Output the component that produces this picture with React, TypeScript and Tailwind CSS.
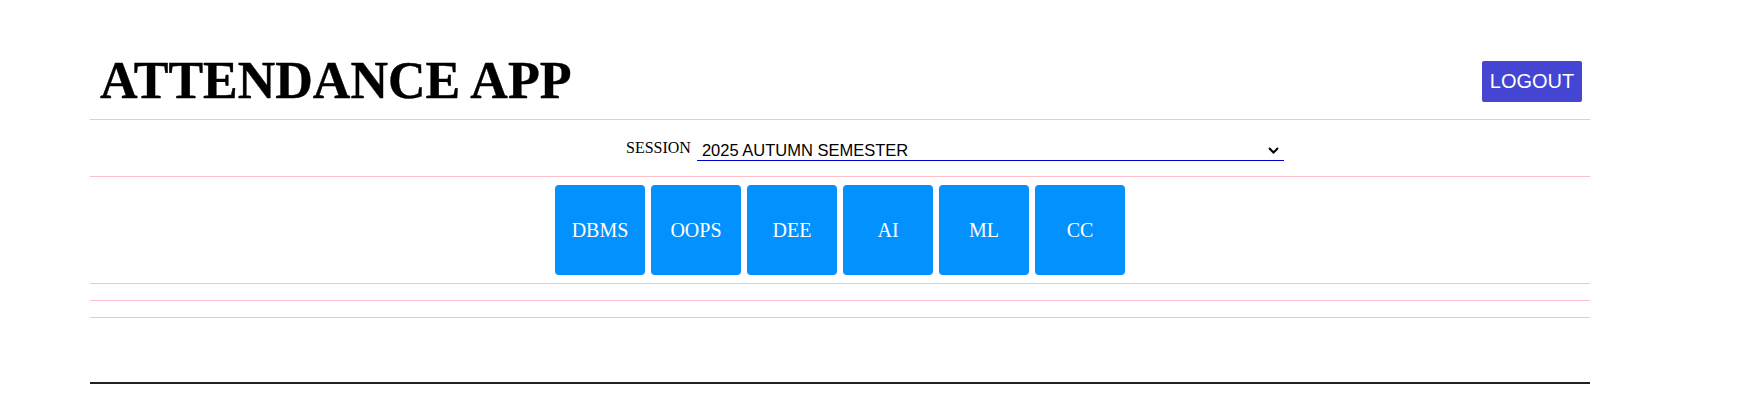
import React from "react";

const subjects = ["DBMS", "OOPS", "DEE", "AI", "ML", "CC"];

export default function App() {
  return (
    <div className="w-[1740px] min-h-[409px] bg-white pt-[43px]">
      <div className="ml-[90px] w-[1500px]">
        <header className="box-border flex h-[77px] items-center justify-between border-b border-[#ffc0cb]">
          <h1
            className="pl-[10px] text-[52px] font-bold leading-normal text-black"
            style={{ fontFamily: '"Liberation Serif", "Times New Roman", serif', WebkitTextStroke: "0.4px #000" }}
          >
            ATTENDANCE APP
          </h1>
          <button
            className="mr-[8px] box-border flex h-[41px] w-[100px] items-center justify-center rounded-[2px] bg-[#4545d3] text-[20px] text-white"
            style={{ fontFamily: '"Liberation Sans", Arial, sans-serif' }}
          >
            LOGOUT
          </button>
        </header>

        <div className="box-border flex h-[57px] items-center border-b border-[#ffc0cb] pl-[536px]">
          <label
            className="text-[16px] leading-normal text-black"
            style={{ fontFamily: '"Liberation Serif", "Times New Roman", serif' }}
          >
            SESSION
          </label>
          <div className="relative ml-[6px] mt-[2px] w-[587px]">
            <select
              className="box-border block h-[24px] w-full appearance-none border-0 border-b border-[#0000cd] bg-transparent pl-[5px] pt-[3px] text-[16.5px] leading-[18px] text-black outline-none"
              style={{ fontFamily: '"Liberation Sans", Arial, sans-serif' }}
              defaultValue="2025 AUTUMN SEMESTER"
            >
              <option>2025 AUTUMN SEMESTER</option>
            </select>
            <svg
              className="pointer-events-none absolute right-[5px] top-[10px]"
              width="11"
              height="7"
              viewBox="0 0 11 7"
              fill="none"
            >
              <path d="M1 1 L5.5 5.5 L10 1" stroke="#000" strokeWidth="2" />
            </svg>
          </div>
        </div>

        <div className="box-border flex h-[107px] items-center justify-center gap-[6px] border-b border-[#ffc0cb] py-[8px]">
          {subjects.map((s) => (
            <button
              key={s}
              className="flex h-[90px] w-[90px] items-center justify-center rounded-[4px] bg-[#0391fe] text-[20px] text-white"
              style={{ fontFamily: '"Liberation Serif", "Times New Roman", serif' }}
            >
              {s}
            </button>
          ))}
        </div>

        <div className="box-border h-[17px] border-b border-[#ffc0cb]" />
        <div className="box-border h-[17px] border-b border-[#ffc0cb]" />

        <div className="mt-[64px] h-[2px] bg-[#222]" />
      </div>
    </div>
  );
}
